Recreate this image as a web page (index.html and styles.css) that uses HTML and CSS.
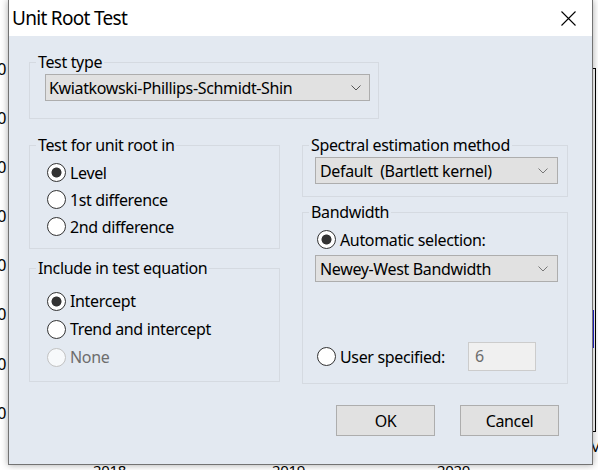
FILE: index.html
```html
<!DOCTYPE html>
<html>
<head>
<meta charset="utf-8">
<title>Unit Root Test</title>
<link rel="stylesheet" href="styles.css">
</head>
<body>
<div class="chart">
  <div class="y-axis">
    <span>0</span><span>0</span><span>0</span><span>0</span><span>0</span><span>0</span><span>0</span><span>0</span>
  </div>
  <span class="year y2018">2018</span>
  <span class="year y2019">2019</span>
  <span class="year y2020">2020</span>
  <div class="plot-frame"></div>
  <div class="series"></div>
  <span class="legend-frag">V</span>
</div>

<div class="dialog">
  <div class="titlebar">
    <span class="title">Unit Root Test</span>
    <svg class="close" width="15" height="15" viewBox="0 0 15 15"><path d="M0.5 0.5 L14.5 14.5 M14.5 0.5 L0.5 14.5" stroke="#000" stroke-width="1.1" fill="none"/></svg>
  </div>
  <div class="content">
    <fieldset class="group g-type">
      <legend>Test type</legend>
      <div class="group-body">
        <div class="select sel-type"><span>Kwiatkowski-Phillips-Schmidt-Shin</span><svg class="chev" width="10" height="6" viewBox="0 0 10 6"><path d="M0.5 0.5 L5 5 L9.5 0.5" stroke="#555" fill="none"/></svg></div>
      </div>
    </fieldset>

    <div class="columns">
      <div class="col">
        <fieldset class="group g-unit">
          <legend>Test for unit root in</legend>
          <div class="group-body">
            <div class="radio"><span class="dot on"></span><span>Level</span></div>
            <div class="radio"><span class="dot"></span><span>1st difference</span></div>
            <div class="radio"><span class="dot"></span><span>2nd difference</span></div>
          </div>
        </fieldset>
        <fieldset class="group g-incl">
          <legend>Include in test equation</legend>
          <div class="group-body">
            <div class="radio r28"><span class="dot on"></span><span>Intercept</span></div>
            <div class="radio r28"><span class="dot"></span><span>Trend and intercept</span></div>
            <div class="radio r28 disabled"><span class="dot"></span><span>None</span></div>
          </div>
        </fieldset>
      </div>
      <div class="col">
        <fieldset class="group g-spec">
          <legend>Spectral estimation method</legend>
          <div class="group-body">
            <div class="select sel-right"><span>Default&nbsp; (Bartlett kernel)</span><svg class="chev" width="10" height="6" viewBox="0 0 10 6"><path d="M0.5 0.5 L5 5 L9.5 0.5" stroke="#777" fill="none"/></svg></div>
          </div>
        </fieldset>
        <fieldset class="group g-band">
          <legend>Bandwidth</legend>
          <div class="group-body">
            <div class="radio ind"><span class="dot on"></span><span>Automatic selection:</span></div>
            <div class="select sel-right sel-nw"><span>Newey-West Bandwidth</span><svg class="chev" width="10" height="6" viewBox="0 0 10 6"><path d="M0.5 0.5 L5 5 L9.5 0.5" stroke="#777" fill="none"/></svg></div>
            <div class="user-row">
              <div class="radio"><span class="dot"></span><span>User specified:</span></div>
              <div class="num-input">6</div>
            </div>
          </div>
        </fieldset>
      </div>
    </div>

    <div class="buttons">
      <div class="btn">OK</div>
      <div class="btn">Cancel</div>
    </div>
  </div>
</div>
</body>
</html>
```

FILE: styles.css
```css
* { box-sizing: border-box; }

html, body {
  margin: 0;
  padding: 0;
}

body {
  width: 598px;
  height: 470px;
  overflow: hidden;
  position: relative;
  background: #ffffff;
  font-family: "Noto Sans", "Open Sans", sans-serif;
  font-size: 16px;
  letter-spacing: -0.35px;
  color: #000;
}

/* ---------- background chart fragments ---------- */
.chart {
  position: absolute;
  inset: 0;
}

.y-axis {
  position: absolute;
  left: -30px;
  top: 45px;
  width: 36px;
  display: flex;
  flex-direction: column;
  align-items: flex-end;
  font-size: 16px;
  line-height: 49.1px;
}

.year {
  position: absolute;
  top: 460px;
  font-size: 15px;
  line-height: 20px;
}
.y2018 { left: 93px; }
.y2019 { left: 272px; }
.y2020 { left: 437px; }

.plot-frame {
  position: absolute;
  left: 300px;
  top: 68px;
  width: 296px;
  height: 364px;
  border: 1px solid #000;
}

.series {
  position: absolute;
  left: 592px;
  top: 310px;
  width: 2px;
  height: 38px;
  background: #1f1fd0;
}

.legend-frag {
  position: absolute;
  left: 591px;
  top: 436px;
  font-size: 15px;
  line-height: 20px;
}

/* ---------- dialog ---------- */
.dialog {
  position: absolute;
  left: 8px;
  top: 0;
  width: 585px;
  height: 465px;
  border: 1px solid #737373;
  border-top: 0;
  background: #e3e9f1;
  box-shadow: 0 0 7px rgba(0, 0, 0, 0.35);
  display: flex;
  flex-direction: column;
}

.titlebar {
  height: 36px;
  flex: none;
  background: #ffffff;
  display: flex;
  align-items: center;
  justify-content: space-between;
  padding: 0 16px 0 3px;
}

.title {
  font-size: 19px;
  letter-spacing: -0.7px;
  line-height: 24px;
}

.close {
  display: block;
}

.content {
  padding: 16px 24px 0 20px;
}

/* ---------- group boxes ---------- */
.group {
  margin: 0;
  padding: 0;
  min-width: 0;
  border: 1px solid #d5dae1;
}

.group legend {
  padding: 0 2px;
  margin-left: 6px;
  line-height: 20px;
}

.g-type {
  width: 350px;
}
.g-type .group-body {
  padding: 2px 0 17px 15px;
}

.columns {
  margin-top: 16px;
  display: grid;
  grid-template-columns: 251px 266px;
  column-gap: 22px;
  align-items: start;
}

.col {
  display: flex;
  flex-direction: column;
}

.g-unit .group-body {
  padding: 4px 0 8px 17px;
}

.g-incl {
  margin-top: 9px;
}
.g-incl .group-body {
  padding: 9px 0 10px 17px;
}

.g-spec .group-body {
  padding: 2px 0 12px 12px;
}

.g-band {
  margin-top: 5px;
}
.g-band .group-body {
  padding: 4px 0 12px 12px;
}

.ind {
  padding-left: 2px;
}

/* ---------- controls ---------- */
.select {
  height: 27px;
  background: #e1e1e1;
  border: 1px solid #adadad;
  display: flex;
  align-items: center;
  justify-content: space-between;
  padding: 0 8px 0 3px;
  white-space: nowrap;
}

.sel-type { width: 325px; }

.sel-right {
  width: 243px;
  padding: 0 9px 0 4px;
}

.sel-nw { margin-top: 2px; }

.chev { display: block; flex: none; }

.radio {
  height: 27px;
  display: flex;
  align-items: center;
  gap: 4px;
  white-space: nowrap;
}

.r28 { height: 28px; }

.dot {
  flex: none;
  width: 19px;
  height: 19px;
  border-radius: 50%;
  border: 1px solid #333333;
  background: #ffffff;
}

.dot.on {
  background: radial-gradient(circle, #333333 0, #333333 4.6px, #ffffff 5.4px);
}

.disabled { color: #6d6d6d; }
.disabled .dot { border-color: #c2c2c2; background: #f7f9fb; }

.user-row {
  margin-top: 60px;
  height: 29px;
  display: flex;
  align-items: center;
  padding-left: 2px;
}

.num-input {
  margin-left: auto;
  margin-right: 31px;
  width: 68px;
  height: 29px;
  background: #f0f0f0;
  border: 1px solid #cccccc;
  color: #6d6d6d;
  padding: 0 0 0 6px;
  line-height: 26px;
}

/* ---------- buttons ---------- */
.buttons {
  margin-top: 21px;
  margin-right: 9px;
  display: flex;
  justify-content: flex-end;
  gap: 25px;
}

.btn {
  width: 99px;
  height: 31px;
  background: #e1e1e1;
  border: 1px solid #adadad;
  display: flex;
  align-items: center;
  justify-content: center;
}
```
